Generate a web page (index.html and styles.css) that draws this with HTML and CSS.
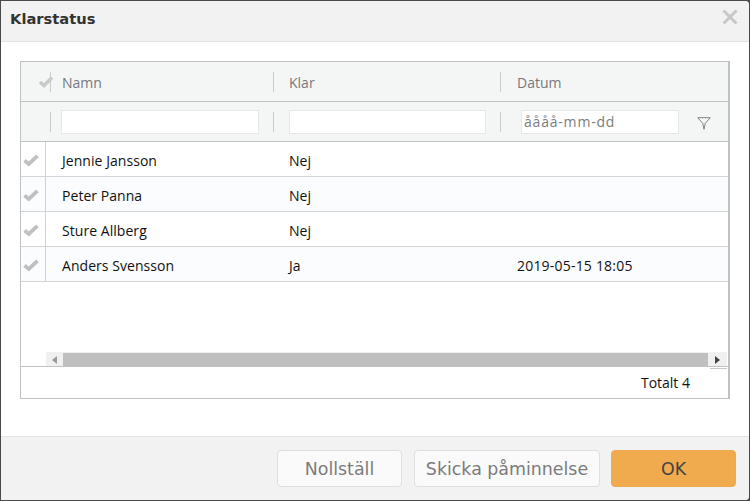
FILE: index.html
```html
<!DOCTYPE html>
<html lang="sv">
<head>
<meta charset="utf-8">
<title>Klarstatus</title>
<link rel="stylesheet" href="styles.css">
</head>
<body>
<div class="dialog">
  <header class="title-bar">
    <h1 class="title">Klarstatus</h1>
    <svg class="close" width="16" height="16" viewBox="0 0 16 16"><path d="M1.500 1.500 14.500 14.500M14.500 1.500 1.500 14.500" stroke="#c8c8c8" stroke-width="3" fill="none"/></svg>
  </header>
  <main class="content">
    <section class="grid">
      <div class="head-row">
        <div class="cell-check">
          <svg class="check head-check" width="16" height="14" viewBox="0 0 16 14"><path d="M2 7 6 10.500 14 2.500" stroke="#c9cbcb" stroke-width="3.600" fill="none"/></svg>
          <span class="sep"></span>
        </div>
        <div class="head-col col-name">Namn</div>
        <span class="sep"></span>
        <div class="head-col col-klar">Klar</div>
        <span class="sep"></span>
        <div class="head-col col-date">Datum</div>
      </div>
      <div class="filter-row">
        <div class="cell-check"><span class="sep"></span></div>
        <div class="filter-col col-name"><input class="filter-input" type="text"></div>
        <span class="sep"></span>
        <div class="filter-col col-klar"><input class="filter-input" type="text"></div>
        <span class="sep"></span>
        <div class="filter-col col-date">
          <input class="filter-input date-input" type="text" placeholder="åååå-mm-dd">
          <svg class="funnel" width="14" height="13" viewBox="0 0 14 13"><path d="M.700.700H13.300L8.300 6.200 7 12.300 5.700 6.200Z" stroke="#7d8488" stroke-width="1" fill="none"/></svg>
        </div>
      </div>
      <div class="body">
        <div class="row">
          <div class="row-check"><svg class="check" width="16" height="14" viewBox="0 0 16 14"><path d="M1.500 7.500 5.800 11 14.500 2.800" stroke="#c0c0c0" stroke-width="3.800" fill="none"/></svg></div>
          <div class="row-name">Jennie Jansson</div><div class="row-klar">Nej</div><div class="row-date"></div>
        </div>
        <div class="row alt">
          <div class="row-check"><svg class="check" width="16" height="14" viewBox="0 0 16 14"><path d="M1.500 7.500 5.800 11 14.500 2.800" stroke="#c0c0c0" stroke-width="3.800" fill="none"/></svg></div>
          <div class="row-name">Peter Panna</div><div class="row-klar">Nej</div><div class="row-date"></div>
        </div>
        <div class="row">
          <div class="row-check"><svg class="check" width="16" height="14" viewBox="0 0 16 14"><path d="M1.500 7.500 5.800 11 14.500 2.800" stroke="#c0c0c0" stroke-width="3.800" fill="none"/></svg></div>
          <div class="row-name">Sture Allberg</div><div class="row-klar">Nej</div><div class="row-date"></div>
        </div>
        <div class="row alt">
          <div class="row-check"><svg class="check" width="16" height="14" viewBox="0 0 16 14"><path d="M1.500 7.500 5.800 11 14.500 2.800" stroke="#c0c0c0" stroke-width="3.800" fill="none"/></svg></div>
          <div class="row-name">Anders Svensson</div><div class="row-klar">Ja</div><div class="row-date">2019-05-15 18:05</div>
        </div>
      </div>
      <div class="scrollbar">
        <span class="arrow-box"><svg width="5" height="8" viewBox="0 0 5 8"><path d="M5 0V8L0 4Z" fill="#9a9a9a"/></svg></span>
        <span class="thumb"></span>
        <span class="arrow-box arrow-right"><svg width="5" height="8" viewBox="0 0 5 8"><path d="M0 0V8L5 4Z" fill="#444"/></svg></span>
      </div>
      <div class="grid-foot">Totalt 4</div>
    </section>
  </main>
  <footer class="actions">
    <button class="btn btn-reset" type="button">Nollställ</button>
    <button class="btn btn-remind" type="button">Skicka påminnelse</button>
    <button class="btn btn-ok" type="button">OK</button>
  </footer>
</div>
</body>
</html>
```
FILE: styles.css
```css
* { box-sizing: border-box; }
html, body { height: 100%; }
body {
  margin: 0;
  background: #4a4a4a;
  padding: 1px;
  font-family: "Open Sans", "Noto Sans", sans-serif;
  font-size: 14px;
  color: #111;
}
.dialog {
  height: 499px;
  background: #fff;
  border-radius: 0 4px 4px 0;
  display: flex;
  flex-direction: column;
  overflow: hidden;
}
.title-bar {
  height: 41px;
  flex: none;
  background: #f2f2f2;
  border-bottom: 1px solid #e3e3e3;
  display: flex;
  align-items: center;
  justify-content: space-between;
  padding: 0 11px 8px 9px;
}
.title {
  margin: 0 0 -3px;
  font: bold 14.7px "DejaVu Sans", Verdana, sans-serif;
  color: #333;
}
.content {
  flex: 1;
  padding: 19px 19px 37px 19px;
  display: flex;
}
.grid {
  flex: 1;
  border: 1px solid #bfc3c5;
  border-right-width: 2px;
  display: flex;
  flex-direction: column;
}
.head-row, .filter-row {
  display: flex;
  align-items: center;
  flex: none;
  background: #f4f5f5;
  height: 40px;
  border-bottom: 1px solid #bfc3c5;
}
.cell-check {
  width: 30px;
  flex: none;
  height: 100%;
  display: flex;
  align-items: center;
  justify-content: flex-end;
}
.sep {
  width: 1px;
  height: 20px;
  background: #c9cccd;
  flex: none;
}
.head-check { margin-right: -4px; }
.head-col {
  color: #76797c;
  padding: 2px 0 0 11px;
}
.col-name { width: 222px; flex: none; }
.col-klar { width: 226px; flex: none; padding-left: 15px; }
.col-date { flex: 1; padding-left: 16px; }
.filter-col { display: flex; align-items: center; }
.filter-col.col-name { padding-left: 10px; padding-right: 14px; }
.filter-col.col-klar { padding-left: 15px; padding-right: 14px; }
.filter-col.col-date { padding-left: 20px; }
.filter-input {
  width: 100%;
  height: 24px;
  border: 1px solid #e6e8e8;
  background: #fff;
  padding: 0 2px;
  font: 14px "Open Sans", sans-serif;
  color: #333;
  outline: none;
  min-width: 0;
}
.date-input { width: 158px; flex: none; letter-spacing: .8px; }
.date-input::placeholder { color: #7a7d80; opacity: 1; }
.funnel { margin-left: 18px; flex: none; margin-top: 3px; }
.body { flex: 1; }
.row {
  display: flex;
  height: 35px;
  border-bottom: 1px solid #d3d6d8;
  align-items: center;
  padding-top: 2px;
}
.row.alt { background: #fafcfe; }
.row-check {
  width: 25px;
  height: calc(100% + 2px);
  margin-top: -2px;
  flex: none;
  border-right: 1px solid #cfd2d4;
  display: flex;
  align-items: center;
  padding: 2px 0 0 2px;
}
.row-name { width: 243px; flex: none; padding-left: 16px; letter-spacing: .05px; }
.row-klar { width: 228px; flex: none; }
.row-date { flex: 1; letter-spacing: .2px; }
.scrollbar {
  flex: none;
  height: 15px;
  margin: 0 1px -1px 25px;
  display: flex;
  background: #bfbfbf;
  border-top: 1px solid #f0f0f0;
  position: relative;
}
.arrow-box {
  width: 17px;
  background: #f0f0f0;
  display: flex;
  align-items: center;
  justify-content: center;
  flex: none;
}
.arrow-right { width: 19px; }
.thumb { flex: 1; }
.grid-foot {
  flex: none;
  height: 32px;
  border-top: 1px solid #bfc3c5;
  text-align: right;
  padding: 6px 38px 0 0;
  position: relative;
}
.grid-foot::before {
  content: "";
  position: absolute;
  top: 1px;
  right: 1px;
  width: 17px;
  height: 1px;
  background: #c4c8ca;
}
.actions {
  height: 64px;
  flex: none;
  background: #f2f2f2;
  border-top: 1px solid #e3e3e3;
  display: flex;
  justify-content: flex-end;
  gap: 12px;
  padding: 13px 13px 0 0;
}
.btn {
  height: 37px;
  border-radius: 4px;
  border: 1px solid #dedede;
  background: #fafafa;
  color: #7c7c7c;
  font: 17.4px "DejaVu Sans", Verdana, sans-serif;
  padding: 0;
}
.btn-reset { width: 125px; }
.btn-remind { width: 186px; margin-right: -1px; }
.btn-ok { width: 125px; background: #f0ab4f; border-color: #eda94f; color: #444; }
.close { flex: none; }
```
